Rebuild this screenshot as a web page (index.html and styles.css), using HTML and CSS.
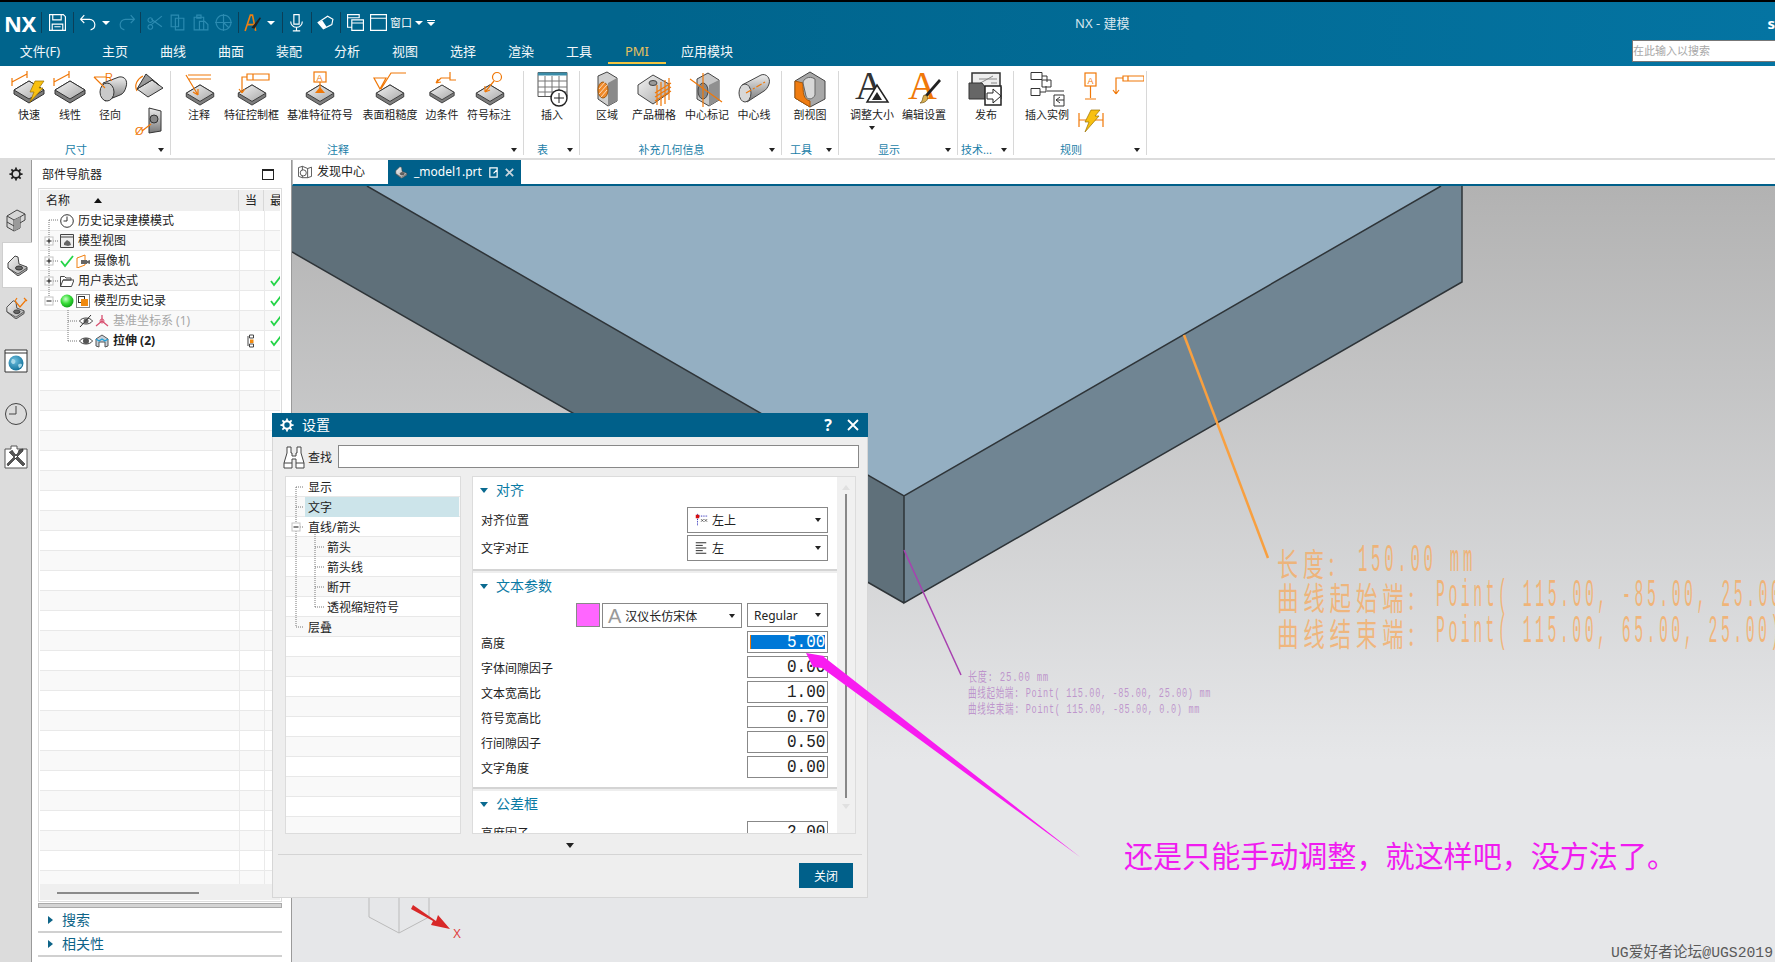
FILE: index.html
```html
<!DOCTYPE html>
<html lang="zh">
<head>
<meta charset="utf-8">
<title>NX - 建模</title>
<link rel="stylesheet" href="styles.css">
</head>
<body>
<svg class="defs" aria-hidden="true">
  <defs>
    <linearGradient id="gt" x1="0" y1="0" x2="1" y2="1"><stop offset="0" stop-color="#f4f4f4"/><stop offset="1" stop-color="#a6a6a6"/></linearGradient>
    <linearGradient id="gs" x1="0" y1="0" x2="0" y2="1"><stop offset="0" stop-color="#eee"/><stop offset="1" stop-color="#777"/></linearGradient>
    <radialGradient id="ball" cx=".4" cy=".35" r=".7"><stop offset="0" stop-color="#c8ffc8"/><stop offset=".5" stop-color="#3ade3a"/><stop offset="1" stop-color="#0a9a14"/></radialGradient>
    <radialGradient id="globe" cx=".4" cy=".35" r=".7"><stop offset="0" stop-color="#6fc0e0"/><stop offset="1" stop-color="#0f6f98"/></radialGradient>
    <symbol id="slab" viewBox="0 0 32 24"><path d="M16 1 31 10v4L16 23 1 14v-4z" fill="#7d7d7d" stroke="#333"/><path d="M16 1 31 10 16 19 1 10z" fill="url(#gt)" stroke="#333"/></symbol>
    <symbol id="part" viewBox="0 0 24 22"><path d="M3 14V9l7-7 3 1 1 7 8 3v3l-9 6z" fill="url(#gt)" stroke="#444"/><path d="M3 14l10 6 9-6" fill="none" stroke="#555"/><ellipse cx="14" cy="14" rx="3.5" ry="2" fill="#666" stroke="#333"/></symbol>
  </defs>
</svg>

<div class="app">
  <div class="strip"></div>
  <header class="head">
    <div class="qbar">
      <span class="logo">NX</span>
      <i class="sep"></i>
      <svg class="qa ml4" viewBox="0 0 18 18"><path class="w" d="M1.500 1.500h13l2 2v13h-15zM4.500 1.500v5h8v-5M4 16.500v-6h10v6M6 13h6"/></svg>
      <i class="sep ml4"></i>
      <svg class="qa ml3" viewBox="0 0 18 18"><path class="w" d="M5 2 1.500 6 5 9.500M1.500 6H10a5 5 0 0 1 5 5 5 5 0 0 1-4 5"/></svg>
      <i class="tri-w ml2"></i>
      <svg class="qa ml3" viewBox="0 0 18 18"><path class="d" d="M13 2l3.500 4L13 9.500M16.500 6H8a5 5 0 0 0-5 5 5 5 0 0 0 4 5"/></svg>
      <i class="sep ml2"></i>
      <svg class="qa ml2" viewBox="0 0 18 18"><path class="d" d="M16 3 6 11M16 13 6 6M5 4.500a2.200 2.200 0 1 0 .1 0zM5 11a2.200 2.200 0 1 0 .1 0z"/></svg>
      <svg class="qa" viewBox="0 0 18 18"><path class="d" d="M3 2h7v11H3zM7 5h8v11H7z"/></svg>
      <svg class="qa" viewBox="0 0 18 18"><path class="d" d="M3 4h9v12H3zM5.500 2h4v3h-4zM8 8h5l3 3v5H8z"/></svg>
      <svg class="qa" viewBox="0 0 18 18"><path class="d" d="M9 2a7 7 0 1 0 .1 0zM1 9h16M9 1v16M9 9l5 5"/></svg>
      <i class="sep ml3"></i>
      <svg class="qa ml2" viewBox="0 0 18 18"><path d="M2 17 7 2h2l3 15M4 11h7" fill="none" stroke="#f08010" stroke-width="1.500"/><path d="M8 14 16 4l1 1-6 10z" fill="#222"/></svg>
      <i class="tri-w ml3"></i>
      <i class="sep ml5"></i>
      <svg class="qa ml2" viewBox="0 0 18 18"><path class="w" d="M6.500 1.500h5v9h-5zM3.500 8a5.500 5.500 0 0 0 11 0M9 13.500v3M5.500 17h7"/></svg>
      <i class="sep ml3"></i>
      <svg class="qa ml2" viewBox="0 0 18 18"><path class="w" d="M2 9 11 3l5 3-1 5-8 4z"/><path d="M2 9l5 6 3-2-4-6z" fill="#fff"/></svg>
      <i class="sep ml3"></i>
      <svg class="qa ml3" viewBox="0 0 18 18"><path class="w" d="M1.500 1.500h11v3h-11zM1.500 4.500v9h4M5.500 6.500h11v10h-11zM5.500 9.500h11"/></svg>
      <svg class="qa" viewBox="0 0 18 18"><path class="w" d="M1.500 1.500h15v15h-15zM1.500 5h15"/></svg>
      <span class="win-txt">窗口</span>
      <i class="tri-w ml3"></i>
      <i class="tri-l ml2"></i>
      <span class="app-title">NX - 建模</span>
      <span class="user">s</span>
    </div>
    <nav class="menu">
      <a class="mi file">文件(F)</a>
      <a class="mi">主页</a><a class="mi">曲线</a><a class="mi">曲面</a><a class="mi">装配</a><a class="mi">分析</a><a class="mi">视图</a><a class="mi">选择</a><a class="mi">渲染</a><a class="mi">工具</a>
      <a class="mi on">PMI</a>
      <a class="mi wide">应用模块</a>
      <div class="find">在此输入以搜索</div>
    </nav>
  </header>

  <section class="ribbon">
    <div class="grp g1">
      <div class="tools p8">
        <div class="tool w42"><svg class="ic" viewBox="0 0 38 37"><use href="#slab" x="3" y="9" width="32" height="24"/><path class="or" d="M2 11 17 3M2 7v8M17 0v7"/><path d="M25 10h9l-5 7h4L20 31l4-10h-4z" fill="#f8c010" stroke="#9a7000" stroke-width=".7"/></svg><span>快速</span></div>
        <div class="tool w40"><svg class="ic" viewBox="0 0 38 37"><use href="#slab" x="3" y="9" width="32" height="24"/><path class="or" d="M3 11 18 3M3 7v8M18 0v7"/></svg><span>线性</span></div>
        <div class="tool w40"><svg class="ic" viewBox="0 0 38 37"><path d="M12 12 28 6c6-1 9 4 7 10-1 4-3 7-6 8l-15 6z" fill="url(#gs)" stroke="#333"/><ellipse cx="16" cy="21" rx="7" ry="9" fill="#c9c9c9" stroke="#333"/><path class="or" d="M3 6h12M3 6l11 11"/><text class="ot" x="14" y="10">R</text></svg><span>径向</span></div>
        <div class="smalls">
          <svg class="ics" viewBox="0 0 34 32"><path d="M6 18 17 26 32 17 21 9z" fill="url(#gt)" stroke="#333"/><path d="M6 18 15 3 28 14 21 9 z" fill="#999" stroke="#333"/><path class="or" d="M6 20C3 14 6 8 12 5"/></svg>
          <svg class="ics" viewBox="0 0 34 32"><path d="M18 3 30 6v20l-12 2z" fill="url(#gs)" stroke="#333"/><circle cx="23" cy="14" r="4" fill="#888" stroke="#333"/><text class="ot" x="4" y="30">Ø</text><path class="or" d="M11 26 20 19"/></svg>
        </div>
      </div>
      <div class="foot"><span>尺寸</span><i class="tri"></i></div>
    </div>

    <div class="grp g2">
      <div class="tools p7">
        <div class="tool w42"><svg class="ic" viewBox="0 0 38 37"><use href="#slab" x="5" y="13" width="30" height="22"/><path class="or" d="M8 4h23M8 8h23M6 4 18 24M18 24l0-6M18 24l-5-3"/></svg><span>注释</span></div>
        <div class="tool w63"><svg class="ic" viewBox="0 0 38 37"><use href="#slab" x="4" y="13" width="30" height="22"/><path class="or" d="M14 3h22v6H14zM20 3v6M14 6H9v16M9 22l-3-4M9 22l3-4"/></svg><span>特征控制框</span></div>
        <div class="tool w74"><svg class="ic" viewBox="0 0 38 37"><use href="#slab" x="4" y="13" width="30" height="22"/><rect class="or" x="13" y="1" width="12" height="10"/><text class="ot sm" x="15.500" y="9.500">A</text><path class="or" d="M19 11v6"/><path d="M14 22l5-6 5 6z" fill="#f07808"/></svg><span>基准特征符号</span></div>
        <div class="tool w66"><svg class="ic" viewBox="0 0 38 37"><use href="#slab" x="4" y="13" width="30" height="22"/><path class="or" d="M3 7h12l-6 11zM10 18 20 2h15"/></svg><span>表面粗糙度</span></div>
        <div class="tool w38"><svg class="ic" viewBox="0 0 38 37"><use href="#slab" x="6" y="13" width="26" height="20"/><path class="or" d="M27 1v8h6M27 7H18l-5 5M13 12l5-1M13 12l2-4"/></svg><span>边条件</span></div>
        <div class="tool w56"><svg class="ic" viewBox="0 0 38 37"><use href="#slab" x="5" y="13" width="30" height="22"/><circle class="or" cx="27" cy="6" r="4.500"/><path class="or" d="M24 10 15 21M15 21l0-6M15 21l5-2"/></svg><span>符号标注</span></div>
      </div>
      <div class="foot"><span>注释</span><i class="tri"></i></div>
    </div>

    <div class="grp g3">
      <div class="tools p8">
        <div class="tool w40"><svg class="ic" viewBox="0 0 38 37"><path d="M5 1.500h29v24H5z" fill="#fff" stroke="#555"/><path d="M5 1.500h29v3H5z" fill="#3a8ca8"/><path d="M5 10h29M5 16h29M5 21h29M12 5v20M19 5v20M26 5v20" stroke="#777" fill="none"/><circle cx="26" cy="27" r="8" fill="#fff" stroke="#222" stroke-width="1.500"/><path d="M26 22v10M21 27h10" stroke="#222" fill="none"/></svg><span>插入</span></div>
      </div>
      <div class="foot"><span>表</span><i class="tri"></i></div>
    </div>

    <div class="grp g4">
      <div class="tools p7">
        <div class="tool w40"><svg class="ic" viewBox="0 0 38 37"><path d="M10 5l9-4 10 6v23l-9 5-10-7z" fill="#cfcfcf" stroke="#444"/><path d="M20 12v23l9-5V7z" fill="#8a8a8a"/><ellipse cx="15" cy="19" rx="5" ry="8" fill="#f08a2a" stroke="#a05a10"/><path d="M11 23 19 14M11 18l6-7M13 26l6-7" stroke="#fff" fill="none" stroke-width=".7"/></svg><span>区域</span></div>
        <div class="tool w54"><svg class="ic" viewBox="0 0 38 37"><path d="M3 14 18 4 34 13v9L18 33 3 23z" fill="url(#gt)" stroke="#444"/><ellipse cx="18" cy="12" rx="4" ry="2.500" fill="#999" stroke="#444"/><path class="or" d="M34 7v22M30 9v24M26 11v24M22 14v20M20 22l16-10M20 26l16-10M20 30l16-10"/></svg><span>产品栅格</span></div>
        <div class="tool w52"><svg class="ic" viewBox="0 0 38 37"><path d="M9 8 20 2l11 7v20l-10 6-12-7z" fill="#c8c8c8" stroke="#444"/><path d="M21 14v21l10-6V9z" fill="#909090"/><ellipse cx="15" cy="20" rx="5" ry="8" fill="#888" stroke="#444"/><path class="or" d="M2 8 34 31M15 2v34"/></svg><span>中心标记</span></div>
        <div class="tool w42"><svg class="ic" viewBox="0 0 38 37"><path d="M7 14 26 4c5-2 10 3 8 9-1 3-3 6-5 7L12 31z" fill="url(#gs)" stroke="#444"/><ellipse cx="10" cy="22" rx="6" ry="9" fill="#d8d8d8" stroke="#444"/><path class="or" d="M11 22 30 11" stroke-dasharray="6 2 2 2"/></svg><span>中心线</span></div>
      </div>
      <div class="foot"><span>补充几何信息</span><i class="tri"></i></div>
    </div>

    <div class="grp g5">
      <div class="tools p6">
        <div class="tool w44"><svg class="ic" viewBox="0 0 38 37"><path d="M19 1 34 10v18L19 36 4 27V10z" fill="#a8a8a8" stroke="#444"/><path d="M4 10v17l15 9V30c-7-2-7-8-7-18z" fill="#f07c10" stroke="#a85808"/><path d="M12 12c0-4 6-8 12-4v16c-2 5-8 5-9 1z" fill="#d8d8d8" stroke="#666"/></svg><span>剖视图</span></div>
      </div>
      <div class="foot"><span>工具</span><i class="tri"></i></div>
    </div>

    <div class="grp g6">
      <div class="tools p8">
        <div class="tool w50 sized"><svg class="ic" viewBox="0 0 38 37"><text class="bigA" x="2" y="28">A</text><path d="M24 14 35 31H14z" fill="#fff" stroke="#222" stroke-width="1.500"/><path d="M24 21 29 29H19z" fill="#222"/></svg><span>调整大小</span><i class="tri"></i></div>
        <div class="tool w54"><svg class="ic" viewBox="0 0 38 37"><text class="bigA oa" x="3" y="28">A</text><path d="M36 10 22 26l-2-2L34 8z" fill="#222"/><path d="M22 25c2 2 0 7-7 7 3-1 2-5 4-8z" fill="#d8b050" stroke="#705010" stroke-width=".7"/></svg><span>编辑设置</span></div>
      </div>
      <div class="foot"><span>显示</span><i class="tri"></i></div>
    </div>

    <div class="grp g7">
      <div class="tools p8">
        <div class="tool w40"><svg class="ic" viewBox="0 0 38 37"><path d="M5 2h28v16H5z" fill="#eee" stroke="#333" stroke-width="1.500"/><path d="M8 15 26 5M12 8h18M24 12h6" stroke="#888" fill="none"/><path d="M2 12h13l3 4h16v12H2z" fill="#666" stroke="#333"/><path d="M18 15h16v19H18z" fill="#fff" stroke="#222" stroke-width="1.500"/><path d="M20 22h6v-4l8 7-8 7v-4h-6z" fill="#fff" stroke="#222"/></svg><span>发布</span></div>
      </div>
      <div class="foot"><span>技术...</span><i class="tri"></i></div>
    </div>

    <div class="grp g8">
      <div class="tools p6">
        <div class="tool w54"><svg class="ic" viewBox="0 0 38 37"><path d="M3 1.500h11v7H3zM3 17.500h9v7H3zM14 9h9v7h-9zM14 5h5v6M12 21h6v-6M19 20h17M26 24h10v11H26z" fill="#fff" stroke="#333"/><path d="M28 29h8M28 29l4-3M28 29l4 3" stroke="#333" fill="none"/></svg><span>插入实例</span></div>
        <div class="minis">
          <svg class="ics" viewBox="0 0 34 32"><rect class="or" x="11" y="2" width="11" height="13"/><text class="ot sm" x="13.500" y="12.500">A</text><path class="or" d="M16.500 15v12M11 28h11"/></svg>
          <svg class="ics" viewBox="0 0 34 32"><path class="or" d="M13 5h21v5H13zM18 5v5M13 7H6v16M6 23l-3-4M6 23l3-4"/></svg>
          <svg class="ics" viewBox="0 0 34 32"><path class="or" d="M5 8v14M29 8v14M5 15h24"/><path d="M17 5h9l-5 6h4L11 27l4-10h-4z" fill="#f8c010" stroke="#9a7000" stroke-width=".7"/></svg>
        </div>
      </div>
      <div class="foot"><span>规则</span><i class="tri"></i></div>
    </div>
  </section>

  <main class="main">
    <aside class="rail">
      <svg class="gear-ic" viewBox="0 0 16 16"><circle cx="8" cy="8" r="4.500" fill="none" stroke="#222" stroke-width="2"/><path d="M8 .5v3M8 12.500v3M.5 8h3M12.500 8h3M2.700 2.700l2 2M11.300 11.300l2 2M2.700 13.300l2-2M11.300 4.700l2-2" stroke="#222" stroke-width="2"/></svg>
      <div class="rb r-a"><svg class="ri" viewBox="0 0 24 24"><path d="M3 8 13 2l8 4v6l-5 3v5l-6 3-7-4z" fill="#d6d6d6" stroke="#444"/><path d="M3 8l7 4 6-3 5-3M10 12v11M16 9v6M3 14l7 4" fill="none" stroke="#444"/><path d="M10 12l6-3v11l-6 3z" fill="#9a9a9a"/></svg></div>
      <div class="rb r-b"><svg class="ri" viewBox="0 0 24 22"><use href="#part"/></svg></div>
      <div class="rb r-c"><svg class="ri" viewBox="0 0 24 24"><use href="#part" y="3" width="22" height="20"/><path class="or" d="M11 5l5 6 6-7M13 2l-2 3M20 2l3 3"/></svg></div>
      <div class="rb r-d"><svg class="ri" viewBox="0 0 24 24"><path d="M1 1h22v22H1z" fill="#fff" stroke="#333"/><path d="M1 4h22" stroke="#333"/><circle cx="12" cy="14" r="7.500" fill="url(#globe)"/><path d="M8 10c3 0 4 2 3 4s-3 1-4-1zM14 16c2-2 4-1 4 0s-2 3-3 3z" fill="#a8d8e8"/></svg></div>
      <div class="rb r-e"><svg class="ri" viewBox="0 0 24 24"><circle cx="12" cy="12" r="10.500" fill="none" stroke="#444"/><path d="M12 4v8H5" fill="none" stroke="#444"/></svg></div>
      <div class="rb r-f"><svg class="ri" viewBox="0 0 24 24"><path d="M1 4h6V1h6v3h10v19H1z" fill="#fff" stroke="#555"/><path d="M5 7l3 3 11 11 2-2L10 8 8 5M19 6l-4 4-9 9-2 2-1-2 11-11 1-3 4-1z" fill="#555" stroke="#222" stroke-width=".6"/></svg></div>
    </aside>

    <div class="nav">
      <div class="nav-title"><span>部件导航器</span><i class="max"></i></div>
      <div class="tbl">
        <div class="thead">
          <div class="th th-n">名称<i class="sort"></i></div>
          <div class="th th-c">当</div>
          <div class="th th-l">最</div>
        </div>
        <div class="tbody">
          <svg class="tree-lines" viewBox="0 0 60 140">
            <path class="dots" d="M9 9v17M9 34v12M9 54v12M9 74v12M9 9h9M13 30h5M13 50h5M13 70h5M13 90h5M28 99v31M28 110h9M28 130h9"/>
            <g class="tog"><rect x="5" y="26" width="8" height="8"/><rect x="5" y="46" width="8" height="8"/><rect x="5" y="66" width="8" height="8"/><rect x="5" y="86" width="8" height="8"/></g>
            <path class="pm" d="M6.500 30h5M9 27.500v5M6.500 50h5M9 47.500v5M6.500 70h5M9 67.500v5M6.500 90h5"/>
          </svg>
          <div class="row"><div class="name"><svg class="ti" viewBox="0 0 14 14"><circle cx="7" cy="7" r="6.300" fill="#fff" stroke="#333"/><path d="M7 2.500V7H3.500" fill="none" stroke="#333"/></svg><span class="tt">历史记录建模模式</span></div></div>
          <div class="row"><div class="name"><svg class="ti" viewBox="0 0 14 14"><path d="M.5.500h13v13H.5z" fill="#eee" stroke="#444"/><path d="M.5 3h13" stroke="#444"/><path d="M4 9l3-3 3 2 1 3-3 1-4-1z" fill="#666"/></svg><span class="tt">模型视图</span></div></div>
          <div class="row"><div class="name"><svg class="ti" viewBox="0 0 14 14"><path class="ck" d="M1 7l4 5 8-10"/></svg><svg class="ti ml2" viewBox="0 0 14 14"><path d="M1 4 9 1v10l-8 3z" fill="#fff" stroke="#f08010"/><path d="M5 6h6v4H5zM11 7l3-1v4l-3-1z" fill="#666"/></svg><span class="tt">摄像机</span></div></div>
          <div class="row"><div class="name"><svg class="ti" viewBox="0 0 14 14"><path d="M.5 12.500v-10h4l1.500 1.500h5v2H3l-2.500 6.500h11L14 6H3" fill="#fff" stroke="#444"/></svg><span class="tt">用户表达式</span></div><div class="cell-last"><svg class="ti" viewBox="0 0 14 14"><path class="ck" d="M2 7l3 4 7-9"/></svg></div></div>
          <div class="row"><div class="name"><svg class="ti" viewBox="0 0 14 14"><circle cx="7" cy="7" r="6.500" fill="url(#ball)"/></svg><svg class="ti ml2" viewBox="0 0 14 14"><rect x=".5" y=".5" width="13" height="13" fill="#fff" stroke="#888"/><rect x="2.500" y="2.500" width="6" height="6" fill="#fff" stroke="#333"/><rect x="5" y="5" width="7" height="7" fill="#f08a10"/></svg><span class="tt">模型历史记录</span></div><div class="cell-last"><svg class="ti" viewBox="0 0 14 14"><path class="ck" d="M2 7l3 4 7-9"/></svg></div></div>
          <div class="row sub"><div class="name"><svg class="ti" viewBox="0 0 14 14"><path d="M.5 7C3 3 11 3 13.500 7 11 11 3 11 .5 7z" fill="#fff" stroke="#444"/><circle cx="7" cy="7" r="2.500" fill="#666"/><path d="M1 13 12 1" stroke="#333"/></svg><svg class="ti ml2" viewBox="0 0 14 14"><path d="M7 1v6L1 12M7 7l6 5" fill="none" stroke="#d85070" stroke-width="1.300"/><circle cx="7" cy="7" r="2" fill="none" stroke="#d85070"/></svg><span class="tt gray">基准坐标系 (1)</span></div><div class="cell-last"><svg class="ti" viewBox="0 0 14 14"><path class="ck" d="M2 7l3 4 7-9"/></svg></div></div>
          <div class="row sub"><div class="name"><svg class="ti" viewBox="0 0 14 14"><path d="M.5 7C3 3 11 3 13.500 7 11 11 3 11 .5 7z" fill="#fff" stroke="#444"/><circle cx="7" cy="7" r="3" fill="#555"/></svg><svg class="ti ml2" viewBox="0 0 14 14"><path d="M1 5 7 1l6 4v7l-3 1V8H4v5l-3-1z" fill="#c8d0d8" stroke="#555"/><path d="M1 5l3 2 3-2 3 2 3-2" fill="none" stroke="#20a0d8" stroke-width="1.300"/></svg><span class="tt bold">拉伸 (2)</span></div><div class="cell-cur"><svg class="ti" viewBox="0 0 14 14"><path d="M4.500 1h4v3h-4zM4.500 10h4v3h-4z" fill="#fff" stroke="#444"/><rect x="5" y="5.500" width="3.500" height="3.500" fill="#f08a10"/><path d="M3 2v10" stroke="#444"/></svg></div><div class="cell-last"><svg class="ti" viewBox="0 0 14 14"><path class="ck" d="M2 7l3 4 7-9"/></svg></div></div>
        </div>
        <div class="hscroll"><i></i></div>
      </div>
      <div class="split"></div>
      <div class="acc"><i class="tri-r"></i>搜索</div>
      <div class="acc"><i class="tri-r"></i>相关性</div>
    </div>

    <div class="work">
      <div class="tabs">
        <div class="tab"><svg class="ti" viewBox="0 0 16 14"><path d="M.5 2 5 .5v13L.5 12zM5 .5 11 3v10.500L5 13.500M11 3l4.500-1.500V12L11 13.500" fill="#fff" stroke="#444"/><circle cx="6" cy="8" r="3.500" fill="#fff" stroke="#444"/></svg><span>发现中心</span></div>
        <div class="tab active"><svg class="ti" viewBox="0 0 24 22"><use href="#part"/></svg><span>_model1.prt</span><svg class="ti-s" viewBox="0 0 12 12"><path d="M2 1h8v10H2zM6 7l4-4" fill="none" stroke="#fff" stroke-width="1.300"/></svg><svg class="ti-s x" viewBox="0 0 12 12"><path d="M2 2l8 8M10 2l-8 8" stroke="#c8d4dc" stroke-width="2"/></svg></div>
      </div>
      <div class="view">
        <svg class="scene" viewBox="292 186 1483 776">
          <path d="M292 186h75L904 496v107L292 252z" fill="#5f707a"/>
          <path d="M1441 186h21v96L904 603V496z" fill="#708593"/>
          <path d="M367 186h1074L904 496z" fill="#94afc2"/>
          <path class="edge" d="M367 186 904 496 1441 186M904 496V603L1462 282V186M292 252 904 603"/>
          <path d="M1184 335 1268 558" stroke="#f8a040" stroke-width="2.500"/>
          <path d="M904 550 961 675" stroke="#a840b0" stroke-width="1.500"/>
          <path d="M369 898v19l30 16 30-16v-19M399 898v35" fill="none" stroke="#bbb"/>
          <path d="M413 905 436 921 438 915 450 929 431 925 433 921 411 909z" fill="#d82828"/>
          <text class="axis" x="453" y="938">X</text>
          <text class="o-cjk" x="1277" y="576" textLength="62" lengthAdjust="spacingAndGlyphs">长度:</text>
          <text class="o-lat" x="1358" y="571" textLength="118" lengthAdjust="spacingAndGlyphs">150.00 mm</text>
          <text class="o-cjk" x="1277" y="610" textLength="142" lengthAdjust="spacingAndGlyphs">曲线起始端:</text>
          <text class="o-lat" x="1436" y="606" textLength="397" lengthAdjust="spacingAndGlyphs">Point( 115.00, -85.00, 25.00) mm</text>
          <text class="o-cjk" x="1277" y="646" textLength="142" lengthAdjust="spacingAndGlyphs">曲线结束端:</text>
          <text class="o-lat" x="1436" y="642" textLength="384" lengthAdjust="spacingAndGlyphs">Point( 115.00, 65.00, 25.00) mm</text>
          <text class="p-note" x="968" y="681" textLength="81" lengthAdjust="spacingAndGlyphs">长度: 25.00 mm</text>
          <text class="p-note" x="968" y="697" textLength="243" lengthAdjust="spacingAndGlyphs">曲线起始端: Point( 115.00, -85.00, 25.00) mm</text>
          <text class="p-note" x="968" y="713" textLength="232" lengthAdjust="spacingAndGlyphs">曲线结束端: Point( 115.00, -85.00, 0.0) mm</text>
          <text class="remark" x="1124" y="867" textLength="552" lengthAdjust="spacingAndGlyphs">还是只能手动调整，就这样吧，没方法了。</text>
          <text class="mark" x="1611" y="957" textLength="162" lengthAdjust="spacingAndGlyphs">UG爱好者论坛@UGS2019</text>
        </svg>
      </div>
    </div>
  </main>

  <div class="dlg">
    <div class="dlg-title">
      <svg class="dgear" viewBox="0 0 16 16"><circle cx="8" cy="8" r="4.300" fill="none" stroke="#fff" stroke-width="2.400"/><path d="M8 .5v3M8 12.500v3M.5 8h3M12.500 8h3M2.700 2.700l2 2M11.300 11.300l2 2M2.700 13.300l2-2M11.300 4.700l2-2" stroke="#fff" stroke-width="2"/></svg>
      <span class="dt">设置</span>
      <span class="dq">?</span>
      <svg class="dx" viewBox="0 0 12 12"><path d="M1 1l10 10M11 1 1 11" stroke="#fff" stroke-width="1.800"/></svg>
    </div>
    <div class="dsearch">
      <svg class="bino" viewBox="0 0 24 24"><path d="M5 2h4v6h1v3h4V8h1V2h4v6l3 10v5h-8V14h-4v9H2v-5L5 8zM2 18h8M14 18h8" fill="#fff" stroke="#444"/></svg>
      <span>查找</span>
      <div class="dinput"></div>
    </div>
    <div class="dbody">
      <div class="dtree">
        <svg class="dtree-lines" viewBox="0 0 60 170">
          <path class="dots" d="M10 10v36M10 54v96M10 10h8M10 30h8M14 50h4M10 150h8M29 55v75M29 70h9M29 90h9M29 110h9M29 130h9"/>
          <rect class="togr" x="6" y="46" width="8" height="8"/><path class="pm" d="M7.500 50h5"/>
        </svg>
        <div class="dr">显示</div>
        <div class="dr sel">文字</div>
        <div class="dr">直线/箭头</div>
        <div class="dr ch">箭头</div>
        <div class="dr ch">箭头线</div>
        <div class="dr ch">断开</div>
        <div class="dr ch">透视缩短符号</div>
        <div class="dr">层叠</div>
      </div>
      <div class="dpanel">
        <div class="dscroll">
          <div class="dsec">
            <div class="shead"><i class="tri-t"></i>对齐</div>
            <div class="frow first"><label>对齐位置</label><div class="combo c-wide"><svg class="ti" viewBox="0 0 16 16"><path d="M4 1v14" stroke="#00a" stroke-dasharray="1 1"/><path d="M4 3.500h11" stroke="#00a" stroke-dasharray="1 1"/><rect x="2" y="2" width="4" height="4" fill="#d81010"/><path d="M8 7l3 3M11 7l-3 3M12 7l3 3M15 7l-3 3" stroke="#333" stroke-width=".8"/></svg><span>左上</span><i class="tri"></i></div></div>
            <div class="frow"><label>文字对正</label><div class="combo c-wide"><svg class="ti" viewBox="0 0 16 16"><path d="M2 2h12M2 5h8M2 8h12M2 11h8M2 14h12" stroke="#111"/></svg><span>左</span><i class="tri"></i></div></div>
          </div>
          <div class="dsec">
            <div class="shead"><i class="tri-t"></i>文本参数</div>
            <div class="fontrow"><i class="swatch"></i><div class="combo c-font"><span class="fa">A</span><span>汉仪长仿宋体</span><i class="tri"></i></div><div class="combo c-style"><span>Regular</span><i class="tri"></i></div></div>
            <div class="nrow"><label>高度</label><div class="num focus"><b><span>5.000</span></b></div></div>
            <div class="nrow"><label>字体间隙因子</label><div class="num"><b><span>0.000</span></b></div></div>
            <div class="nrow"><label>文本宽高比</label><div class="num"><b><span>1.000</span></b></div></div>
            <div class="nrow"><label>符号宽高比</label><div class="num"><b><span>0.700</span></b></div></div>
            <div class="nrow"><label>行间隙因子</label><div class="num"><b><span>0.500</span></b></div></div>
            <div class="nrow"><label>文字角度</label><div class="num"><b><span>0.000</span></b></div></div>
          </div>
          <div class="dsec">
            <div class="shead"><i class="tri-t"></i>公差框</div>
            <div class="nrow first"><label>高度因子</label><div class="num"><b><span>2.000</span></b></div></div>
          </div>
        </div>
        <div class="vbar"><i class="up"></i><i class="thumb"></i><i class="down"></i></div>
      </div>
    </div>
    <div class="dmore"><i class="tri big"></i></div>
    <div class="dfoot"><button class="close">关闭</button></div>
  </div>

  <svg class="pink" viewBox="800 645 290 220"><path d="M806 653 824 656 824 657 1080 857 822 668 813 667z" fill="#f81cf0"/></svg>
</div>
</body>
</html>
```

FILE: styles.css
```css
* { box-sizing: border-box; }
html, body { margin: 0; height: 100%; overflow: hidden; }
body { font-family: "Noto Sans", "Noto Sans CJK SC", sans-serif; font-size: 12px; color: #222; background: #fff; }
i { display: block; font-style: normal; }
svg { display: block; flex: none; }
.defs { position: absolute; width: 0; height: 0; }
.app { position: relative; width: 1775px; height: 962px; display: flex; flex-direction: column; overflow: hidden; }
.strip { height: 2px; background: #000; flex: none; }

.head { flex: none; background: linear-gradient(90deg, #00648c 0, #00648c 35%, #0474a2 100%); color: #fff; }
.qbar { height: 34px; padding: 7px 0 0 4px; display: flex; align-items: center; }
.logo { width: 37px; font: 700 22px/26px "Noto Sans", sans-serif; letter-spacing: -.3px; }
.sep { width: 1px; height: 21px; background: #0b3f58; flex: none; }
.qa { width: 23px; height: 19px; }
.w { fill: none; stroke: #fff; stroke-width: 1.1; }
.d { fill: none; stroke: #2b8bb1; stroke-width: 1.1; }
.tri-w { width: 0; height: 0; margin-right: 2px; border: 4px solid transparent; border-top: 4px solid #fff; border-bottom: 0; flex: none; }
.tri-l { width: 8px; height: 6px; border-top: 1px solid #fff; position: relative; flex: none; }
.tri-l::after { content: ""; display: block; margin-top: 1px; border: 4px solid transparent; border-top: 4px solid #fff; border-bottom: 0; }
.ml2 { margin-left: 2px; } .ml3 { margin-left: 3px; } .ml4 { margin-left: 4px; } .ml5 { margin-left: 5px; }
.win-txt { width: 22px; font-size: 11px; line-height: 14px; white-space: nowrap; }
.app-title { margin-left: 640px; font-size: 13px; color: #d8e6ee; white-space: nowrap; }
.user { margin-left: auto; margin-right: 0; font: 700 15px/18px "Noto Sans", sans-serif; }

.menu { height: 30px; padding-left: 11px; display: flex; align-items: flex-start; }
.mi { width: 58px; height: 28px; padding-top: 3px; display: flex; align-items: center; justify-content: center; font-size: 13px; color: #f2f7fa; border-bottom: 2px solid transparent; }
.mi.file { margin-right: 17px; }
.mi.on { color: #e6c060; border-bottom-color: #f4c440; }
.mi.wide { width: 82px; }
.find { margin: 4px 0 0 auto; width: 143px; height: 22px; background: #fff; border: 1px solid #777; border-right: 0; color: #a8a8a8; font-size: 11px; line-height: 20px; white-space: nowrap; }

.ribbon { flex: none; height: 94px; background: #fff; border-bottom: 2px solid #dcdcdc; display: flex; }
.grp { height: 92px; position: relative; display: flex; flex-direction: column; }
.grp::after { content: ""; position: absolute; right: 0; top: 5px; bottom: 3px; width: 1px; background: #d8d8d8; }
.g1 { width: 171px; } .g2 { width: 353px; } .g3 { width: 56px; } .g4 { width: 202px; }
.g5 { width: 57px; } .g6 { width: 119px; } .g7 { width: 56px; } .g8 { width: 133px; }
.tools { height: 75px; padding-top: 5px; display: flex; align-items: flex-start; }
.p6 { padding-left: 6px; } .p7 { padding-left: 7px; } .p8 { padding-left: 8px; }
.tool { display: flex; flex-direction: column; align-items: center; font-size: 11px; line-height: 14px; white-space: nowrap; }
.ic { width: 38px; height: 37px; }
.w38 { width: 38px; } .w40 { width: 40px; } .w42 { width: 42px; } .w44 { width: 44px; } .w50 { width: 50px; }
.w52 { width: 52px; } .w54 { width: 54px; } .w56 { width: 56px; } .w63 { width: 63px; } .w66 { width: 66px; } .w74 { width: 74px; }
.sized .tri { margin-top: 4px; margin-left: 0; }
.smalls { width: 36px; display: flex; flex-direction: column; gap: 2px; align-items: center; }
.minis { width: 70px; display: grid; grid-template-columns: 36px 34px; row-gap: 2px; }
.ics { width: 34px; height: 32px; }
.or { fill: none; stroke: #f07808; stroke-width: 1.2; }
.ot { fill: #f07808; font: 11px "Liberation Sans", sans-serif; }
.ot.sm { font-size: 9px; }
.bigA { font: 40px "Liberation Serif", serif; fill: #333; }
.bigA.oa { fill: #f07808; }
.foot { height: 17px; display: flex; align-items: center; padding-right: 7px; color: #1a7ea8; font-size: 11px; line-height: 14px; }
.foot span { flex: 1; text-align: center; white-space: nowrap; padding-left: 0; }
.tri { width: 0; height: 0; flex: none; margin-left: 3px; border: 3.5px solid transparent; border-top: 4px solid #222; border-bottom: 0; }
.foot .tri { margin-left: 6px; }

.main { flex: 1; min-height: 0; display: flex; }
.rail { width: 32px; flex: none; background: #dcdcdc; border-right: 1px solid #9a9a9a; display: flex; flex-direction: column; align-items: center; }
.gear-ic { width: 14px; height: 14px; margin: 7px 0 7px 0; }
.rb { width: 31px; flex: none; display: flex; align-items: center; justify-content: center; }
.ri { width: 24px; height: 24px; }
.r-a { height: 44px; margin-top: 10px; }
.r-b { height: 46px; background: #fff; margin-left: 2px; width: 30px; border: 1px solid #cfcfcf; border-right: 0; }
.r-c { height: 40px; } .r-d { height: 40px; margin-top: 13px; } .r-e { height: 40px; margin-top: 13px; } .r-f { height: 40px; margin-top: 3px; }

.nav { width: 260px; flex: none; background: #fff; border-right: 1px solid #9a9a9a; padding: 0 9px 0 6px; display: flex; flex-direction: column; }
.nav-title { height: 28px; padding: 0 8px 0 4px; display: flex; align-items: center; justify-content: space-between; }
.max { width: 12px; height: 11px; border: 1px solid #222; border-top-width: 2px; }
.tbl { width: 244px; border: 1px solid #dcdcdc; padding: 1px; flex: none; }
.thead { height: 21px; background: #efefef; display: grid; grid-template-columns: 199px 25px 16px; }
.th { display: flex; align-items: center; border-right: 1px solid #d8d8d8; overflow: hidden; line-height: 16px; }
.th-n { padding-left: 6px; }
.th-c { justify-content: center; }
.th-l { border: 0; padding-left: 6px; }
.sort { width: 0; height: 0; margin-left: 24px; border: 4px solid transparent; border-bottom: 5px solid #111; border-top: 0; }
.tbody { position: relative; height: 673px;
  background:
    linear-gradient(#eaeaea, #eaeaea) 199px 0 / 1px 100% no-repeat,
    linear-gradient(#eaeaea, #eaeaea) 224px 0 / 1px 100% no-repeat,
    repeating-linear-gradient(180deg, #fff 0, #fff 19px, #e9e9e9 19px, #e9e9e9 20px, #f9f9f9 20px, #f9f9f9 39px, #e9e9e9 39px, #e9e9e9 40px); }
.tree-lines { position: absolute; left: 0; top: 0; width: 60px; height: 140px; }
.dots { fill: none; stroke: #777; stroke-dasharray: 1 1; }
.tog rect, .togr { fill: #fff; stroke: #c4c4c4; }
.pm { fill: none; stroke: #111; }
.row { height: 20px; position: relative; display: grid; grid-template-columns: 199px 25px 16px; grid-template-areas: "n c l"; }
.name { grid-area: n; padding-left: 20px; display: flex; align-items: center; white-space: nowrap; }
.row.sub .name { padding-left: 39px; }
.cell-cur { grid-area: c; display: flex; align-items: center; justify-content: center; }
.cell-last { grid-area: l; display: flex; align-items: center; padding-left: 5px; overflow: hidden; }
.ti { width: 14px; height: 14px; }
.ck { fill: none; stroke: #24d448; stroke-width: 1.8; }
.tt { margin-left: 4px; line-height: 16px; }
.gray { color: #a8a8a8; }
.bold { font-weight: 700; }
.hscroll { height: 16px; background: #efefef; padding-top: 8px; }
.hscroll i { width: 142px; height: 2px; margin-left: 17px; background: #8a8a8a; }
.split { height: 5px; margin-top: 1px; background: #d4d4d4; border: 1px solid #aaa; flex: none; }
.acc { height: 24px; border-bottom: 2px solid #d0d0d0; display: flex; align-items: center; color: #0e6488; font-size: 14px; line-height: 20px; padding-left: 10px; flex: none; }
.split + .acc { height: 25px; }
.tri-r { width: 0; height: 0; margin-right: 9px; border: 4px solid transparent; border-left: 5px solid #0e6488; border-right: 0; }

.work { flex: 1; min-width: 0; display: flex; flex-direction: column; }
.tabs { height: 26px; flex: none; border-bottom: 2px solid #00608a; border-left: 1px solid #bbb; display: flex; padding-left: 5px; background: #fff; }
.tab { height: 24px; display: flex; align-items: center; gap: 5px; width: 90px; line-height: 16px; }
.tab.active { width: 133px; background: #00608a; color: #fff; font-size: 12px; padding-left: 6px; gap: 6px; }
.ti-s { width: 11px; height: 11px; }
.ti-s.x { margin-left: -1px; }
.view { flex: 1; min-height: 0; background: linear-gradient(180deg, #b2b2b2 0, #e6e7e9 74%, #e6e7e9 100%); }
.scene { width: 100%; height: 100%; }
.edge { fill: none; stroke: #2e3438; stroke-width: 1.5; }
.axis { fill: #e04040; font: 12px "Liberation Sans", sans-serif; }
.o-cjk { font: 32px "Noto Sans CJK SC", sans-serif; fill: #f8a858; fill-opacity: .72; letter-spacing: 7px; }
.o-lat { font: 38px "Liberation Mono", monospace; fill: #f8a858; fill-opacity: .75; letter-spacing: 9px; }
.p-note { font: 13px "Liberation Mono", "Noto Sans CJK SC", monospace; fill: #b888c8; fill-opacity: .85; letter-spacing: 1px; }
.remark { font: 30px "Noto Sans CJK SC", sans-serif; fill: #f01cf0; }
.mark { font: 15px "Liberation Mono", "Noto Sans CJK SC", monospace; fill: #5a5a5a; }

.dlg { position: absolute; left: 272px; top: 413px; width: 596px; height: 485px; background: #eee; border: 1px solid #d6d6d6; border-top: 0; display: flex; flex-direction: column; }
.dlg-title { height: 24px; margin: 0 -1px; background: #00608a; color: #fff; display: flex; align-items: center; padding-left: 8px; flex: none; }
.dgear { width: 14px; height: 14px; }
.dt { margin-left: 8px; font-size: 14px; line-height: 18px; }
.dq { margin-left: auto; font: 700 16px/18px "Noto Sans", sans-serif; }
.dx { width: 12px; height: 12px; margin: 0 9px 0 15px; }
.dsearch { height: 23px; margin-top: 8px; padding: 0 8px 0 9px; display: flex; align-items: center; flex: none; }
.bino { width: 24px; height: 24px; }
.dsearch span { margin-left: 2px; width: 30px; }
.dinput { flex: 1; height: 23px; background: #fff; border: 1px solid #888; }
.dbody { height: 358px; margin-top: 8px; padding: 0 11px 0 12px; display: flex; gap: 11px; flex: none; }
.dtree { position: relative; width: 176px; border: 1px solid #dcdcdc; overflow: hidden;
  background: repeating-linear-gradient(180deg, #fff 0, #fff 19px, #e8e8e8 19px, #e8e8e8 20px, #f9f9f9 20px, #f9f9f9 39px, #e8e8e8 39px, #e8e8e8 40px); }
.dtree-lines { position: absolute; left: 0; top: 0; width: 60px; height: 170px; }
.dr { height: 20px; padding: 1px 0 0 22px; line-height: 19px; position: relative; white-space: nowrap; }
.dr.ch { padding-left: 41px; }
.dr.sel { margin-left: 19px; margin-right: 1px; padding-left: 3px; background: #cce4ea; }
.dpanel { flex: 1; min-width: 0; background: #f0f0f0; border: 1px solid #dcdcdc; display: flex; overflow: hidden; }
.dscroll { width: 364px; flex: none; height: 356px; overflow: hidden; background: #eee; }
.dsec { background: #fff; padding: 0 9px 6px; border-bottom: 2px solid #d4d4d4; margin-bottom: 2px; }
.dsec:nth-child(2) { padding-bottom: 9px; }
.shead { height: 26px; display: flex; align-items: center; color: #0a7aa4; font-size: 14px; line-height: 20px; }
.tri-t { width: 0; height: 0; margin: 0 8px 0 -2px; border: 4px solid transparent; border-top: 5px solid #0a6a90; border-bottom: 0; }
.frow { display: flex; justify-content: space-between; align-items: center; height: 26px; margin-bottom: 2px; }
.frow.first { margin-top: 4px; }
.frow label { margin-left: -1px; }
.combo { height: 26px; background: #fff; border: 1px solid #888; display: flex; align-items: center; padding: 0 6px 0 6px; white-space: nowrap; }
.combo span { flex: 1; }
.combo .ti { margin-right: 4px; }
.c-wide { width: 141px; }
.fontrow { display: flex; justify-content: flex-end; align-items: flex-start; height: 25px; margin-top: 4px; margin-bottom: 3px; }
.swatch { width: 24px; height: 24px; background: #ff66ff; border: 1px solid #888; margin-right: 2px; }
.c-font { width: 140px; height: 25px; padding-left: 5px; margin-right: 5px; }
.fa { flex: none !important; font: 20px/24px "Liberation Sans", sans-serif; color: #999; margin-right: 4px; }
.c-style { width: 81px; height: 24px; }
.nrow { display: flex; justify-content: space-between; align-items: center; height: 22px; margin-bottom: 3px; }
.nrow:last-child { margin-bottom: 0; }
.nrow.first { margin-top: 4px; }
.nrow label { margin-left: -1px; padding-top: 1px; }
.num { width: 81px; height: 22px; background: #fff; border: 1px solid #888; padding: 3px 2px; display: flex; }
.num b { flex: 1; font: 400 16px/14px "Liberation Mono", monospace; overflow: hidden; display: flex; justify-content: flex-end; }
.num span { margin-right: -10px; transform: scaleY(1.2); }
.num.focus b { background: #0078d7; color: #fff; border-left: 1px solid #f07808; }
.vbar { flex: 1; position: relative; display: flex; flex-direction: column; align-items: center; padding: 8px 0; }
.vbar .thumb { position: absolute; top: 17px; left: 8px; width: 2px; height: 304px; background: #888; }
.vbar .up, .vbar .down { width: 0; height: 0; border: 4px solid transparent; }
.vbar .up { border-bottom: 5px solid #e0e0e0; border-top: 0; }
.vbar .down { margin-top: auto; border-top: 5px solid #e0e0e0; border-bottom: 0; margin-bottom: 16px; }
.dmore { height: 20px; display: flex; align-items: center; justify-content: center; flex: none; }
.tri.big { margin: 3px 0 0; border-width: 4.500px; border-top-width: 5px; border-bottom-width: 0; }
.dfoot { flex: 1; margin: 0 5px; border-top: 1px solid #d4d4d4; padding: 8px 9px 0 0; display: flex; justify-content: flex-end; align-items: flex-start; }
.close { width: 54px; height: 25px; border: 0; padding: 0; background: #00608a; color: #fff; font: 12px "Noto Sans", "Noto Sans CJK SC", sans-serif; }

.pink { position: absolute; left: 800px; top: 645px; width: 290px; height: 220px; pointer-events: none; }
```
